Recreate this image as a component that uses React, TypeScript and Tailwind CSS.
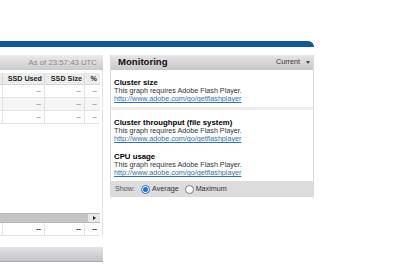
import React from "react";

const F = "font-['Liberation_Sans',Arial,sans-serif]";

function Radio({ checked }: { checked?: boolean }) {
  return checked ? (
    <div className="w-[9px] h-[9px] rounded-full border border-[#1a6fd8] bg-white flex items-center justify-center">
      <div className="w-[5px] h-[5px] rounded-full bg-[#1a6fd8]" />
    </div>
  ) : (
    <div className="w-[9px] h-[9px] rounded-full border border-[#7a7a7a] bg-white" />
  );
}

function Graph({ title, first }: { title: string; first?: boolean }) {
  return (
    <div className={first ? "" : "mt-[10px]"}>
      <div className="text-[7.8px] leading-[8px] font-bold text-black">{title}</div>
      <div className="text-[7.2px] leading-[8px] text-[#333]">This graph requires Adobe Flash Player.</div>
      <div className="text-[7.2px] leading-[8px] text-[#2f6fb3] underline">http://www.adobe.com/go/getflashplayer</div>
    </div>
  );
}

function Row({ bg, bold }: { bg: string; bold?: boolean }) {
  const t = bold ? "font-bold text-[#222]" : "text-[#666]";
  return (
    <div className={`flex h-[13px] border-b border-[#e4e4e4] ${bg} text-[7.2px] leading-[12px] ${t}`}>
      <div className="w-[3px] border-r border-[#e0e0e0]" />
      <div className="w-[42px] border-r border-[#e0e0e0] text-right pr-[3px]">--</div>
      <div className="w-[40px] border-r border-[#e0e0e0] text-right pr-[3px]">--</div>
      <div className="w-[15px] text-right pr-[3px]">--</div>
    </div>
  );
}

export default function App() {
  return (
    <div className={`w-[400px] h-[266px] overflow-hidden bg-white pt-[41px] ${F}`}>
      <div className="w-[314px] h-[6px] bg-[#0c5a9d] rounded-tr-[6px]" />
      <div className="flex items-start mt-[8px]">
        {/* left panel */}
        <div className="w-[103px] flex flex-col">
          <div className="h-[15px] flex items-center justify-end pr-[6px] bg-gradient-to-b from-[#ebebeb] to-[#c9cacc] text-[7.8px] text-[#8a8a8a]">
            As of 23:57:43 UTC
          </div>
          <div className="h-[168px] border-r border-[#e2e2e2] pt-[3px] flex flex-col">
            <div className="w-[100px] flex h-[12px] bg-[#ececec] border-b border-[#d6d6d6] text-[7.2px] leading-[11px] font-bold text-[#222]">
              <div className="w-[3px] border-r border-[#d8d8d8]" />
              <div className="w-[42px] border-r border-[#d8d8d8] text-right pr-[2px]">SSD Used</div>
              <div className="w-[40px] border-r border-[#d8d8d8] text-right pr-[2px]">SSD Size</div>
              <div className="w-[15px] text-right pr-[3px]">%</div>
            </div>
            <div className="w-[100px]">
              <Row bg="bg-white" />
              <Row bg="bg-[#f5f5f5]" />
              <Row bg="bg-white" />
            </div>
            <div className="flex-1" />
            <div className="w-[100px] h-[10px] flex border-y border-[#b8b8b8]">
              <div className="flex-1 bg-[#c4c4c4]" />
              <div className="w-[12px] bg-[#e8e8e8] flex items-center justify-center">
                <div className="w-0 h-0 border-y-[2.5px] border-y-transparent border-l-[3px] border-l-[#222]" />
              </div>
            </div>
            <div className="w-[100px]">
              <Row bg="bg-white" bold />
            </div>
            <div className="h-[2px]" />
          </div>
          <div className="mt-[9px] h-[15px] bg-gradient-to-b from-[#e3e4e6] to-[#c3c5c9] border-b border-[#a9abaf]" />
        </div>

        {/* monitoring panel */}
        <div className="w-[204px] ml-[7px] border-x border-[#dcdcdc] flex flex-col">
          <div className="h-[15px] flex items-center justify-between pl-[7px] pr-[3px] bg-gradient-to-b from-[#e6e6e6] to-[#c6c7c9]">
            <span className="text-[9.6px] font-bold text-[#111]">Monitoring</span>
            <span className="flex items-center text-[7.2px] text-[#333]">
              Current
              <span className="ml-[6px] w-0 h-0 border-x-[2px] border-x-transparent border-t-[3px] border-t-[#3a4a66]" />
            </span>
          </div>
          <div className="pl-[3px] pt-[9px] pb-[4px] border-b-[3px] border-[#ececec]">
            <Graph title="Cluster size" first />
          </div>
          <div className="pl-[3px] pt-[9px] pb-[4px]">
            <Graph title="Cluster throughput (file system)" first />
            <Graph title="CPU usage" />
          </div>
          <div className="h-[16px] bg-[#dcdcdc] flex items-center pl-[4px] text-[7.2px] text-[#555]">
            <span>Show:</span>
            <span className="ml-[6px]"><Radio checked /></span>
            <span className="ml-[2px] text-[#333]">Average</span>
            <span className="ml-[6px]"><Radio /></span>
            <span className="ml-[2px] text-[#333]">Maximum</span>
          </div>
          <div className="h-[1px] bg-white" />
        </div>
      </div>
    </div>
  );
}
